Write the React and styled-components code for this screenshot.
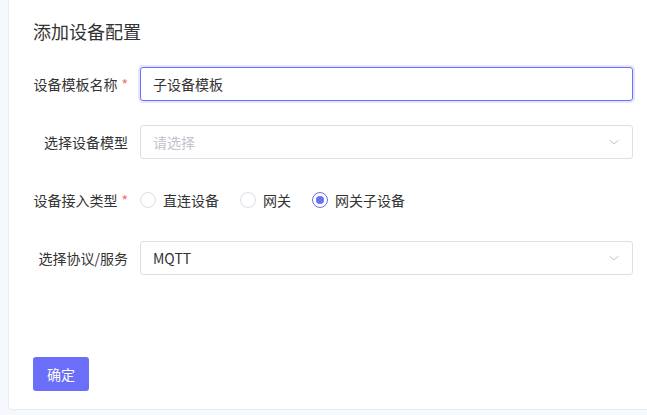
import React, { useState } from 'react';
import styled, { createGlobalStyle } from 'styled-components';

const GlobalStyle = createGlobalStyle`
  html, body {
    margin: 0;
    padding: 0;
    background: #f5f8fc;
    overflow: hidden;
  }
  body {
    font-family: "Noto Sans CJK SC", "Noto Sans", sans-serif;
    color: #333;
  }
`;

const Page = styled.div`
  padding-left: 8px;
  height: 415px;
`;

const Card = styled.section`
  width: 650px;
  height: 410px;
  box-sizing: border-box;
  background: #fff;
  border: 1px solid #e9edf3;
  border-top: none;
  border-radius: 0 0 4px 4px;
  padding: 18px 24px 0 24px;
  display: flex;
  flex-direction: column;
`;

const Title = styled.h3`
  margin: 0 0 23px;
  font-size: 18px;
  font-weight: 400;
  line-height: 26px;
  color: #333;
`;

const Form = styled.div`
  display: flex;
  flex-direction: column;
  gap: 24px;
`;

const Row = styled.div`
  display: flex;
  align-items: center;
  height: 34px;
`;

const Label = styled.label`
  width: 107px;
  flex-shrink: 0;
  box-sizing: border-box;
  padding-right: 12px;
  text-align: right;
  font-size: 14px;
  color: #333;
  white-space: nowrap;

  & span {
    color: #f56c6c;
    margin-left: 4px;
  }
`;

const Field = styled.div`
  flex: 1;
  height: 34px;
  box-sizing: border-box;
  border: 1px solid ${(p) => (p.$focused ? '#6b6ef7' : '#dcdfe6')};
  box-shadow: ${(p) => (p.$focused ? '0 0 0 2px rgba(107,110,247,0.18)' : 'none')};
  border-radius: 3px;
  display: flex;
  align-items: center;
  padding: 0 12px;
  font-size: 14px;
  color: ${(p) => (p.$placeholder ? '#c0c4cc' : '#333')};
  justify-content: space-between;
`;

const Chevron = styled.svg`
  width: 12px;
  height: 12px;
  color: #c0c4cc;
`;

const RadioGroup = styled.div`
  display: flex;
  align-items: center;
  gap: 21px;
`;

const RadioItem = styled.label`
  display: flex;
  align-items: center;
  gap: 7px;
  font-size: 14px;
  color: #333;
  cursor: pointer;
`;

const RadioDot = styled.span`
  width: 16px;
  height: 16px;
  box-sizing: border-box;
  border-radius: 50%;
  border: 1px solid ${(p) => (p.$checked ? '#6b6ef7' : '#dcdfe6')};
  display: flex;
  align-items: center;
  justify-content: center;

  &::after {
    content: '';
    width: 8px;
    height: 8px;
    border-radius: 50%;
    background: ${(p) => (p.$checked ? '#6b6ef7' : 'transparent')};
  }
`;

const Footer = styled.div`
  margin-top: 82px;
`;

const Button = styled.button`
  width: 56px;
  height: 34px;
  border: none;
  border-radius: 3px;
  background: #6b6ef9;
  color: #fff;
  font-family: inherit;
  font-size: 14px;
  cursor: pointer;
`;

const ArrowDown = () => (
  <Chevron viewBox="0 0 12 12" fill="none">
    <path d="M1.5 4.2 6 7.8l4.5-3.6" stroke="currentColor" strokeWidth="1" />
  </Chevron>
);

const types = ['直连设备', '网关', '网关子设备'];

export default function App() {
  const [type, setType] = useState('网关子设备');

  return (
    <>
      <GlobalStyle />
      <Page>
        <Card>
          <Title>添加设备配置</Title>
          <Form>
            <Row>
              <Label>设备模板名称<span>*</span></Label>
              <Field $focused>子设备模板</Field>
            </Row>
            <Row>
              <Label>选择设备模型</Label>
              <Field $placeholder>
                请选择
                <ArrowDown />
              </Field>
            </Row>
            <Row>
              <Label>设备接入类型<span>*</span></Label>
              <RadioGroup>
                {types.map((t) => (
                  <RadioItem key={t} onClick={() => setType(t)}>
                    <RadioDot $checked={type === t} />
                    {t}
                  </RadioItem>
                ))}
              </RadioGroup>
            </Row>
            <Row>
              <Label>选择协议/服务</Label>
              <Field>
                MQTT
                <ArrowDown />
              </Field>
            </Row>
          </Form>
          <Footer>
            <Button>确定</Button>
          </Footer>
        </Card>
      </Page>
    </>
  );
}
